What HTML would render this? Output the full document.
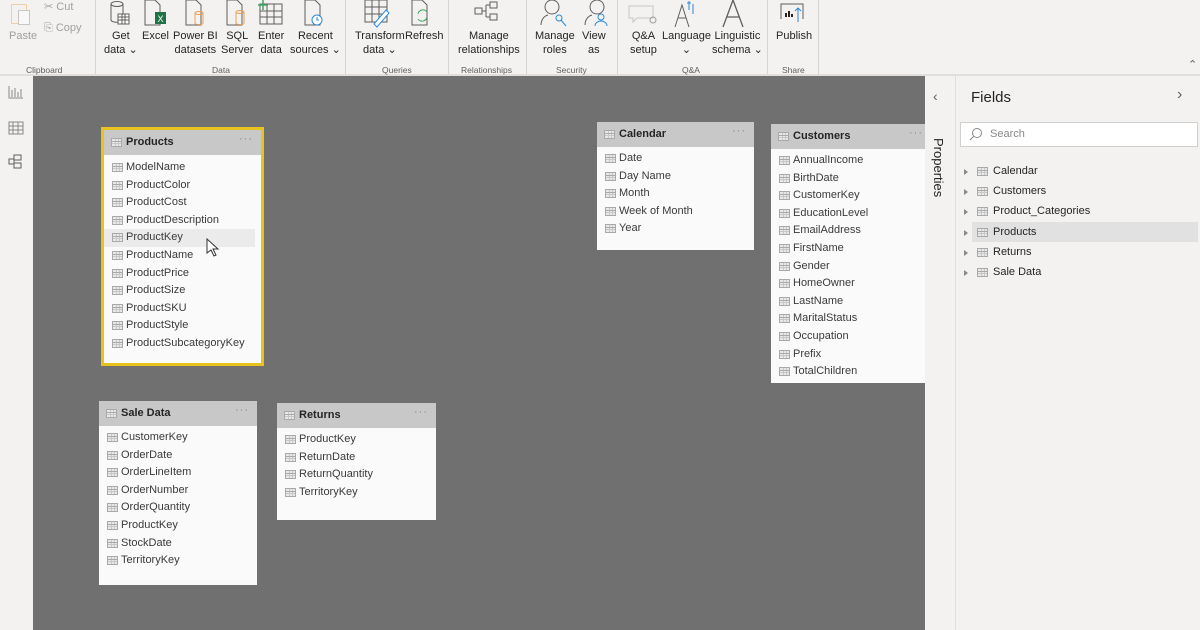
<!DOCTYPE html>
<html><head><meta charset="utf-8">
<style>
*{margin:0;padding:0;box-sizing:border-box}
body{width:1200px;height:630px;overflow:hidden;background:#f3f2f1;font-family:"Liberation Sans",sans-serif;color:#252423;position:relative}
.abs{position:absolute}
.rb{position:absolute;top:29px;font-size:11px;text-align:center;line-height:14px;color:#252423;white-space:nowrap}
.gl{position:absolute;top:65px;font-size:8.5px;color:#605e5c;text-align:center}
.sep{position:absolute;top:0;width:1px;height:74px;background:#d6d4d2}
#canvas{position:absolute;left:33px;top:76px;width:892px;height:554px;background:#707070}
.card{position:absolute;background:#fafafa;font-size:11px}
.hd{height:25px;background:#c8c8c8;font-weight:bold;font-size:11px;line-height:25px;padding-left:22px;position:relative;color:#252423}
.hd .dots{position:absolute;right:8px;top:-3px;color:#8a8886;font-weight:normal;letter-spacing:1px}
.hd .ti{position:absolute;left:7px;top:8px}
.rows{padding-top:3px}
.r{height:17.6px;line-height:17.6px;padding-left:22px;position:relative;color:#3b3a39}
.ic,.ti{width:11px;height:9px;border:1px solid #a9a9a9;background:
linear-gradient(#a9a9a9,#a9a9a9) 0 2px/100% 1px no-repeat,
linear-gradient(#c8c8c8,#c8c8c8) 0 4px/100% 1px no-repeat,
linear-gradient(90deg,#c8c8c8,#c8c8c8) 3px 0/1px 100% no-repeat,
linear-gradient(90deg,#c8c8c8,#c8c8c8) 6px 0/1px 100% no-repeat,#e8e8e8}
.r .ic{position:absolute;left:8px;top:4px}
.fl{position:absolute;left:993px;font-size:11px;color:#252423}
.fi{position:absolute;left:977px;width:11px;height:9px}
.tri{position:absolute;left:964px;width:0;height:0;border-left:4px solid #8a8886;border-top:3px solid transparent;border-bottom:3px solid transparent}
</style></head><body>

<!-- ribbon -->
<div class="abs" style="left:0;top:74px;width:1200px;height:2px;background:#e1dfdd"></div>
<!-- paste icon -->
<div class="abs" style="left:11px;top:4px;width:16px;height:20px;border:1px solid #f0cfa8;border-radius:1px"></div>
<div class="abs" style="left:18px;top:10px;width:12px;height:15px;border:1px solid #c8c6c4;background:#f8f8f8"></div>
<div class="rb" style="left:9px;color:#a19f9d">Paste</div>
<div class="abs" style="left:44px;top:0px;font-size:11px;color:#a19f9d">✂ Cut</div>
<div class="abs" style="left:44px;top:22px;font-size:11px;color:#a19f9d">⎘ Copy</div>
<div class="gl" style="left:26px">Clipboard</div>
<div class="sep" style="left:95px"></div>

<svg class="abs" style="left:100px;top:0" width="240" height="28" fill="none" stroke="#605e5c" stroke-width="1">
<path d="M11 4v16c0 3 12 3 12 0V4"/><ellipse cx="17" cy="4" rx="6" ry="2.5"/><rect x="18" y="14" width="11" height="10" fill="#fff"/><path d="M18 17h11M18 20h11M22 14v10M25 14v10"/>
<path d="M45 0h10l5 5v20H45z"/><rect x="55" y="12" width="11" height="12" fill="#217346" stroke="none"/><text x="57.5" y="22" fill="#fff" stroke="none" font-size="9" font-family="Liberation Sans">X</text>
<path d="M86 0h10l5 5v20H86z"/><path d="M95 13v10c0 2 8 2 8 0V13" stroke="#e8a15b"/><ellipse cx="99" cy="13" rx="4" ry="1.5" stroke="#e8a15b"/>
<path d="M127 0h10l5 5v20h-15z"/><path d="M136 12v11c0 2 8 2 8 0V12" stroke="#e8a15b"/><ellipse cx="140" cy="12" rx="4" ry="1.5" stroke="#e8a15b"/>
<rect x="160" y="4" width="22" height="20"/><path d="M160 11h22M160 17h22M167 4v20M174 4v20"/><path d="M163 0v10M158 5h10" stroke="#3fa564" stroke-width="1.5"/>
<path d="M205 0h10l5 5v20h-15z"/><circle cx="217" cy="20" r="5" fill="#fff" stroke="#2b88d8"/><path d="M217 17v3h2" stroke="#2b88d8"/>
<rect x="255" y="0" width="0" height="0"/>
</svg>
<div class="rb" style="left:104px">Get<br>data ⌄</div>
<div class="rb" style="left:142px">Excel</div>
<div class="rb" style="left:173px">Power BI<br>datasets</div>
<div class="rb" style="left:221px">SQL<br>Server</div>
<div class="rb" style="left:258px">Enter<br>data</div>
<div class="rb" style="left:290px">Recent<br>sources ⌄</div>
<div class="gl" style="left:212px">Data</div>
<div class="sep" style="left:345px"></div>

<svg class="abs" style="left:360px;top:0" width="80" height="28" fill="none" stroke="#605e5c">
<rect x="5" y="0" width="22" height="22"/><path d="M5 7h22M5 14h22M12 0v22M19 0v22"/><path d="M14 24l12-14 3 3-12 14z" stroke="#2b88d8" fill="#fff"/>
<path d="M52 0h10l5 5v20H52z"/><path d="M58 14a5 5 0 0 1 9-2M67 17a5 5 0 0 1-9 2" stroke="#3fa564"/>
</svg>
<div class="rb" style="left:355px">Transform<br>data ⌄</div>
<div class="rb" style="left:405px">Refresh</div>
<div class="gl" style="left:382px">Queries</div>
<div class="sep" style="left:448px"></div>

<svg class="abs" style="left:470px;top:0" width="40" height="28" fill="none" stroke="#605e5c">
<rect x="5" y="8" width="7" height="6"/><rect x="20" y="2" width="7" height="6"/><rect x="20" y="14" width="7" height="6"/><path d="M12 11h4M16 5v12M16 5h4M16 17h4"/>
</svg>
<div class="rb" style="left:458px">Manage<br>relationships</div>
<div class="gl" style="left:461px">Relationships</div>
<div class="sep" style="left:526px"></div>

<svg class="abs" style="left:535px;top:0" width="80" height="28" fill="none" stroke="#605e5c">
<circle cx="17" cy="7" r="7"/><path d="M6 25c0-5 3-9 7-10"/><circle cx="24" cy="18" r="3" stroke="#2b88d8"/><path d="M26 20l5 6" stroke="#2b88d8"/>
<circle cx="62" cy="7" r="7"/><path d="M50 25c0-5 3-9 7-10"/><circle cx="66" cy="17" r="3" stroke="#2b88d8"/><path d="M60 26c0-3 3-5 6-5s6 2 6 5" stroke="#2b88d8"/>
</svg>
<div class="rb" style="left:535px">Manage<br>roles</div>
<div class="rb" style="left:582px">View<br>as</div>
<div class="gl" style="left:556px">Security</div>
<div class="sep" style="left:617px"></div>

<svg class="abs" style="left:625px;top:0" width="140" height="28" fill="none" stroke="#605e5c">
<path d="M4 6h24v12H12l-4 4v-4H4z" stroke="#c8c6c4"/><circle cx="28" cy="20" r="3" stroke="#a19f9d"/>
<path d="M50 27l7-22 7 22M53 18h8"/><path d="M62 3h4M64 1v9M68 4v10" stroke="#2b88d8"/>
<path d="M98 27l10-27 10 27M102 17h12" stroke-width="1.3"/>
</svg>
<div class="rb" style="left:630px">Q&amp;A<br>setup</div>
<div class="rb" style="left:662px">Language<br>⌄</div>
<div class="rb" style="left:712px">Linguistic<br>schema ⌄</div>
<div class="gl" style="left:682px">Q&amp;A</div>
<div class="sep" style="left:767px"></div>

<svg class="abs" style="left:778px;top:0" width="30" height="28" fill="none" stroke="#605e5c">
<path d="M3 19V4h22v15"/><path d="M8 17v-4M11 17v-6M14 17v-3" stroke="#252423" stroke-width="2"/><path d="M20 22V8M17 11l3-3 3 3" stroke="#2b88d8"/>
</svg>
<div class="rb" style="left:776px">Publish</div>
<div class="gl" style="left:782px">Share</div>
<div class="sep" style="left:818px"></div>
<div class="abs" style="left:1188px;top:58px;font-size:11px;color:#605e5c">⌃</div>

<!-- left nav -->
<div class="abs" style="left:0;top:76px;width:33px;height:554px;background:#f3f2f1"></div>
<svg class="abs" style="left:8px;top:85px" width="16" height="95" fill="none" stroke="#8a8886">
<path d="M1 1v12h14M4 12V5M7 12V3M10 12V7M13 12V4"/>
<rect x="1" y="37" width="14" height="12"/><path d="M1 41h14M1 45h14M5 37v12M10 37v12"/>
<rect x="6" y="70" width="7" height="5" stroke="#605e5c"/><rect x="6" y="78" width="7" height="5" stroke="#605e5c"/><rect x="1" y="74" width="5" height="5" stroke="#605e5c"/>
</svg>

<div id="canvas"></div>

<!-- Products -->
<div class="card" style="left:101px;top:127px;width:163px;height:239px;border:3px solid #e8c21f">
<div class="hd"><span class="ti"></span>Products<span class="dots">···</span></div>
<div class="rows" style="padding-top:4px">
<div class="r"><span class="ic"></span>ModelName</div>
<div class="r"><span class="ic"></span>ProductColor</div>
<div class="r"><span class="ic"></span>ProductCost</div>
<div class="r"><span class="ic"></span>ProductDescription</div>
<div class="r" style="background:#ebebeb;margin-right:6px"><span class="ic"></span>ProductKey</div>
<div class="r"><span class="ic"></span>ProductName</div>
<div class="r"><span class="ic"></span>ProductPrice</div>
<div class="r"><span class="ic"></span>ProductSize</div>
<div class="r"><span class="ic"></span>ProductSKU</div>
<div class="r"><span class="ic"></span>ProductStyle</div>
<div class="r"><span class="ic"></span>ProductSubcategoryKey</div>
</div></div>
<svg class="abs" style="left:206px;top:238px" width="14" height="20"><path d="M1 1v14l4-3 3 6 2-1-3-6h5z" fill="#fff" stroke="#333"/></svg>

<!-- Calendar -->
<div class="card" style="left:597px;top:122px;width:157px;height:128px">
<div class="hd"><span class="ti"></span>Calendar<span class="dots">···</span></div>
<div class="rows">
<div class="r"><span class="ic"></span>Date</div>
<div class="r"><span class="ic"></span>Day Name</div>
<div class="r"><span class="ic"></span>Month</div>
<div class="r"><span class="ic"></span>Week of Month</div>
<div class="r"><span class="ic"></span>Year</div>
</div></div>

<!-- Customers -->
<div class="card" style="left:771px;top:124px;width:154px;height:259px">
<div class="hd"><span class="ti"></span>Customers<span class="dots" style="right:2px">···</span></div>
<div class="rows">
<div class="r"><span class="ic"></span>AnnualIncome</div>
<div class="r"><span class="ic"></span>BirthDate</div>
<div class="r"><span class="ic"></span>CustomerKey</div>
<div class="r"><span class="ic"></span>EducationLevel</div>
<div class="r"><span class="ic"></span>EmailAddress</div>
<div class="r"><span class="ic"></span>FirstName</div>
<div class="r"><span class="ic"></span>Gender</div>
<div class="r"><span class="ic"></span>HomeOwner</div>
<div class="r"><span class="ic"></span>LastName</div>
<div class="r"><span class="ic"></span>MaritalStatus</div>
<div class="r"><span class="ic"></span>Occupation</div>
<div class="r"><span class="ic"></span>Prefix</div>
<div class="r"><span class="ic"></span>TotalChildren</div>
</div></div>

<!-- Sale Data -->
<div class="card" style="left:99px;top:401px;width:158px;height:184px">
<div class="hd"><span class="ti"></span>Sale Data<span class="dots">···</span></div>
<div class="rows">
<div class="r"><span class="ic"></span>CustomerKey</div>
<div class="r"><span class="ic"></span>OrderDate</div>
<div class="r"><span class="ic"></span>OrderLineItem</div>
<div class="r"><span class="ic"></span>OrderNumber</div>
<div class="r"><span class="ic"></span>OrderQuantity</div>
<div class="r"><span class="ic"></span>ProductKey</div>
<div class="r"><span class="ic"></span>StockDate</div>
<div class="r"><span class="ic"></span>TerritoryKey</div>
</div></div>

<!-- Returns -->
<div class="card" style="left:277px;top:403px;width:159px;height:117px">
<div class="hd"><span class="ti"></span>Returns<span class="dots">···</span></div>
<div class="rows">
<div class="r"><span class="ic"></span>ProductKey</div>
<div class="r"><span class="ic"></span>ReturnDate</div>
<div class="r"><span class="ic"></span>ReturnQuantity</div>
<div class="r"><span class="ic"></span>TerritoryKey</div>
</div></div>

<!-- properties strip -->
<div class="abs" style="left:925px;top:76px;width:31px;height:554px;background:#f3f2f1;border-right:1px solid #e1dfdd"></div>
<div class="abs" style="left:933px;top:88px;font-size:14px;color:#605e5c">‹</div>
<div class="abs" style="left:931px;top:138px;font-size:13px;color:#252423;writing-mode:vertical-rl">Properties</div>

<!-- fields pane -->
<div class="abs" style="left:971px;top:89px;font-size:15px;color:#252423">Fields</div>
<div class="abs" style="left:1177px;top:86px;font-size:16px;color:#605e5c">›</div>
<div class="abs" style="left:960px;top:122px;width:238px;height:25px;background:#fff;border:1px solid #d2d0ce"></div>
<svg class="abs" style="left:969px;top:127px" width="14" height="14" fill="none" stroke="#8a8886"><circle cx="8" cy="6" r="4.5"/><path d="M5 9l-4 4"/></svg>
<div class="abs" style="left:990px;top:128px;font-size:11px;color:#8a8886">Search</div>
<div class="abs" style="left:972px;top:222px;width:226px;height:20px;background:#e1e1e1"></div>

<div class="tri" style="top:169px"></div><div class="fi ic" style="top:167px"></div><div class="fl" style="top:165px">Calendar</div>
<div class="tri" style="top:189px"></div><div class="fi ic" style="top:187px"></div><div class="fl" style="top:185px">Customers</div>
<div class="tri" style="top:209px"></div><div class="fi ic" style="top:207px"></div><div class="fl" style="top:205px">Product_Categories</div>
<div class="tri" style="top:230px"></div><div class="fi ic" style="top:228px"></div><div class="fl" style="top:226px">Products</div>
<div class="tri" style="top:250px"></div><div class="fi ic" style="top:248px"></div><div class="fl" style="top:246px">Returns</div>
<div class="tri" style="top:270px"></div><div class="fi ic" style="top:268px"></div><div class="fl" style="top:266px">Sale Data</div>
</body></html>
